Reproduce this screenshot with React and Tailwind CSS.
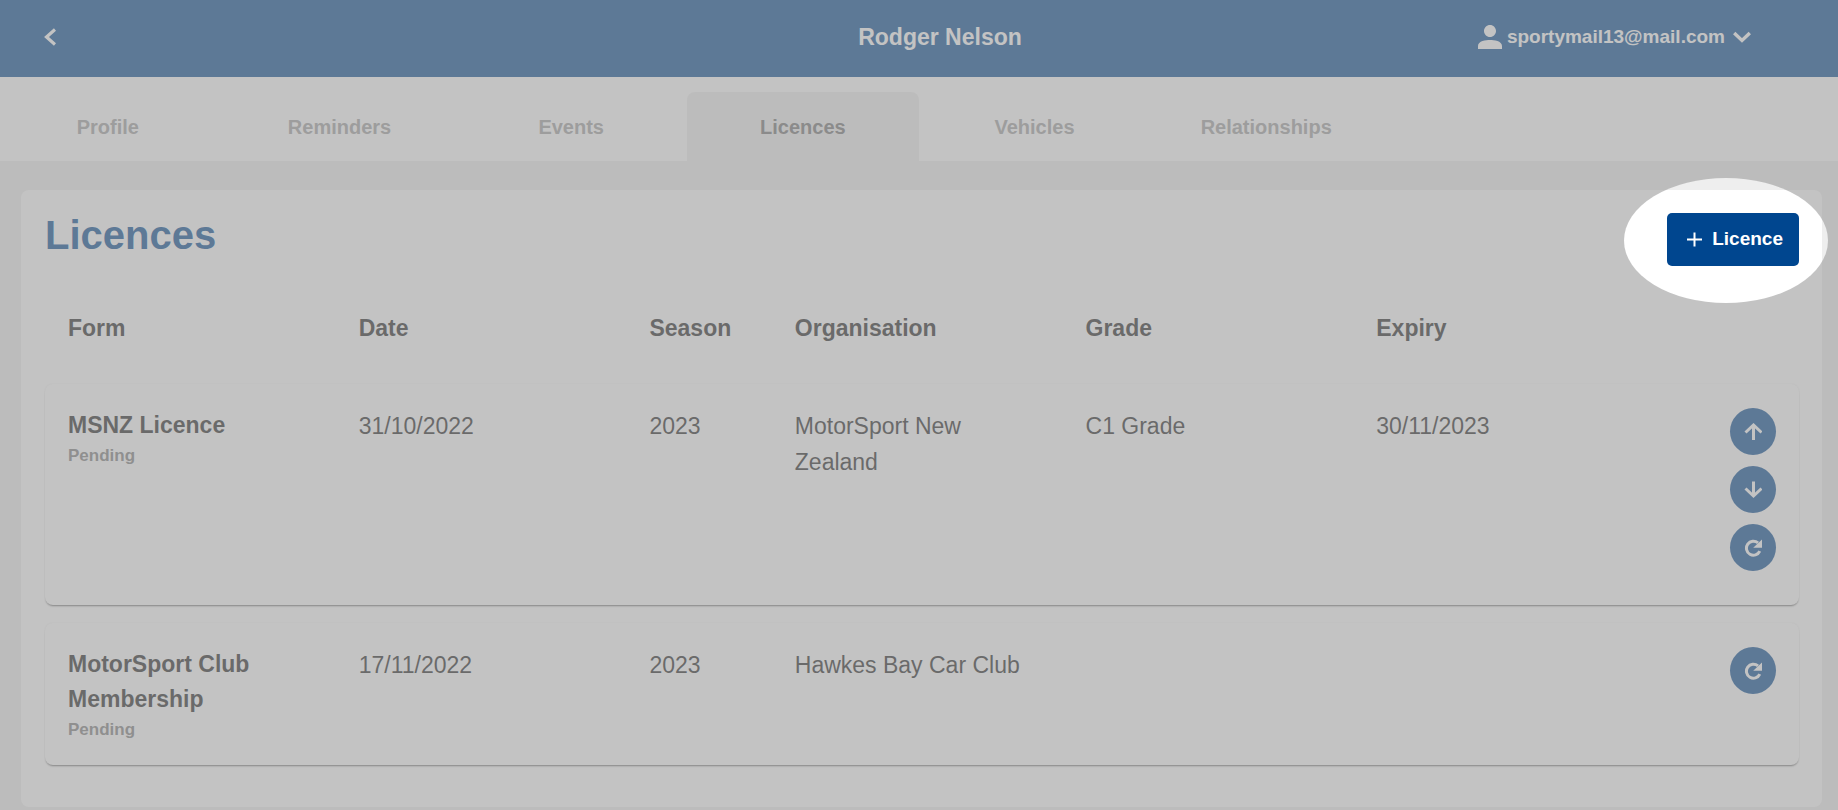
const TABS = ["Profile", "Reminders", "Events", "Licences", "Vehicles", "Relationships"];

const COLUMNS = ["Form", "Date", "Season", "Organisation", "Grade", "Expiry"];

const LICENCES = [
  {
    form: "MSNZ Licence",
    status: "Pending",
    date: "31/10/2022",
    season: "2023",
    organisation: "MotorSport New Zealand",
    grade: "C1 Grade",
    expiry: "30/11/2023",
    actions: ["upgrade", "downgrade", "renew"],
  },
  {
    form: "MotorSport Club Membership",
    status: "Pending",
    date: "17/11/2022",
    season: "2023",
    organisation: "Hawkes Bay Car Club",
    grade: "",
    expiry: "",
    actions: ["renew"],
  },
];

const ROW_GRID = "grid grid-cols-[40fr_40fr_20fr_40fr_40fr_55fr] px-[23px]";

function ActionIcon({ name }) {
  return (
    <svg
      viewBox="0 0 18 18"
      className="size-[18px]"
      fill="none"
      stroke="currentColor"
      strokeWidth="3"
      aria-hidden="true"
    >
      {name === "upgrade" && <path d="M9.500 17V2.500M1.500 9.500L9.500 2l8 7.500" />}
      {name === "downgrade" && <path d="M9.500 .5v14.500M1.500 7.500L9.500 15l8-7.500" />}
      {name === "renew" && (
        <>
          <path d="M15.800 12.200A7 7 0 1 1 14 3.900" />
          <path d="M18.200 .4V8.800H9.200z" fill="currentColor" stroke="none" />
        </>
      )}
    </svg>
  );
}

function Header() {
  return (
    <header className="grid h-[77px] grid-cols-[1fr_auto_1fr] items-center bg-[#00468f] pb-1 pl-[42px] text-white">
      <button type="button" aria-label="Back" className="justify-self-start">
        <svg viewBox="0 0 14 18" className="h-[18px] w-[14px]" fill="none" stroke="currentColor" strokeWidth="3.200">
          <path d="M13 1.500L4.500 9l8.500 7.500" />
        </svg>
      </button>
      <h1 className="text-[23px] leading-9 font-bold">Rodger Nelson</h1>
      <button type="button" className="flex items-center justify-self-end pr-[87px] text-[19px] leading-6 font-bold">
        <svg viewBox="4 4 16 16" className="mr-[5px] size-6" fill="currentColor" aria-hidden="true">
          <path d="M12 12c2.210 0 4-1.790 4-4s-1.790-4-4-4-4 1.790-4 4 1.790 4 4 4zm0 2c-2.670 0-8 .6-8 4v2h16v-2c0-3.400-5.330-4-8-4z" />
        </svg>
        sportymail13@mail.com
        <svg viewBox="0 0 18 12" className="ml-2 h-3 w-[18px]" fill="none" stroke="currentColor" strokeWidth="3.400" aria-hidden="true">
          <path d="M1.200 2L9 9.500 16.800 2" />
        </svg>
      </button>
    </header>
  );
}

function Tabs() {
  return (
    <nav className="bg-white pt-[15px]">
      <ul className="-ml-2 flex">
        {TABS.map((tab) => {
          const active = tab === "Licences";
          return (
            <li key={tab} className="w-[12.55%]">
              <a
                href="#"
                aria-current={active ? "page" : undefined}
                className={
                  "flex h-[69px] items-center justify-center rounded-t-lg text-[20px] font-bold " +
                  (active ? "bg-[#eeeeee] text-[#737373]" : "text-[#a0a0a0]")
                }
              >
                {tab}
              </a>
            </li>
          );
        })}
      </ul>
    </nav>
  );
}

function LicenceTable() {
  return (
    <table className="mt-11 block text-[23px] leading-9 text-[#222222]">
      <thead className="block pb-[38px]">
        <tr className={ROW_GRID}>
          {COLUMNS.map((column) => (
            <th key={column} scope="col" className="text-left font-bold">
              {column}
            </th>
          ))}
        </tr>
      </thead>
      <tbody className="flex flex-col gap-[18px]">
        {LICENCES.map((licence) => (
          <tr
            key={licence.form}
            className={
              ROW_GRID +
              " rounded-lg bg-white pt-6 pb-[22px] shadow-[0_2px_2px_-1px_rgba(0,0,0,0.6),0_0_2px_rgba(0,0,0,0.1)]"
            }
          >
            <td className="pr-12">
              <div className="leading-[35px] font-bold">{licence.form}</div>
              <div className="text-[17px] leading-[26px] font-bold text-[#7d7d7d]">{licence.status}</div>
            </td>
            <td>{licence.date}</td>
            <td>{licence.season}</td>
            <td className="pr-12">{licence.organisation}</td>
            <td>{licence.grade}</td>
            <td className="flex items-start justify-between">
              <span>{licence.expiry}</span>
              <div className="flex flex-col gap-[11px] pb-[12px]">
                {licence.actions.map((action) => (
                  <button
                    key={action}
                    type="button"
                    aria-label={action}
                    className="flex h-[47px] w-[46px] items-center justify-center rounded-[50%] bg-[#00468f] text-white"
                  >
                    <ActionIcon name={action} />
                  </button>
                ))}
              </div>
            </td>
          </tr>
        ))}
      </tbody>
    </table>
  );
}

export default function App() {
  return (
    <div className="relative min-h-screen overflow-hidden bg-[#eeeeee] font-['Liberation_Sans',Arial,sans-serif]">
      <Header />
      <Tabs />
      <main className="pt-[29px] pr-4 pb-[3px] pl-[21px]">
        <section className="rounded-lg bg-white pt-[23px] pr-[23px] pb-[42px] pl-6">
          <div className="flex items-start justify-between">
            <h2 className="text-[40px] leading-[44px] font-bold text-[#00468f]">Licences</h2>
            <div className="relative">
              <button
                type="button"
                className="flex h-[53px] items-center gap-[10px] rounded-[5px] bg-[#00468f] pr-4 pl-5 text-[19px] font-bold text-white"
              >
                <svg viewBox="0 0 15 15" className="size-[15px]" stroke="currentColor" strokeWidth="2" aria-hidden="true">
                  <path d="M7.500 .5v14M0 7.500h15" />
                </svg>
                Licence
              </button>
              {/* Spotlight: the spread shadow dims everything outside the ellipse */}
              <div className="pointer-events-none absolute -top-[35px] -right-[29px] z-10 h-[125px] w-[204px] rounded-[50%] shadow-[0_0_0_3000px_rgba(155,155,155,0.6)]" />
            </div>
          </div>
          <LicenceTable />
        </section>
      </main>
    </div>
  );
}
